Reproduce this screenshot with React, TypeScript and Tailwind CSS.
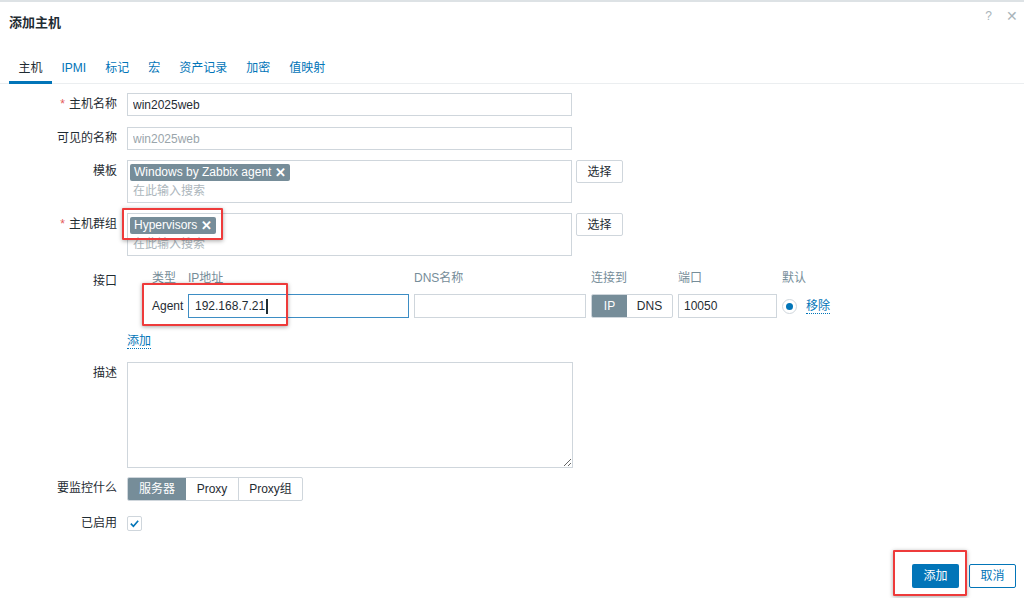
import React from "react";

const font = { fontFamily: '"Liberation Sans", Arial, "Noto Sans CJK SC", sans-serif' };

function Label({ text, required, className = "" }: { text: string; required?: boolean; className?: string }) {
  return (
    <div className={`w-[117px] shrink-0 text-right leading-[23px] text-[#1f2c33] ${className}`}>
      {required ? <span className="mr-[4px] text-[#e45959]">*</span> : null}
      {text}
    </div>
  );
}

function Highlight({ className }: { className: string }) {
  return (
    <span
      className={`pointer-events-none absolute rounded-[1px] border-2 border-[#ee3b3b] shadow-[0_1px_4px_rgba(0,0,0,0.35)] ${className}`}
    />
  );
}

function Chip({ text, children }: { text: string; children?: React.ReactNode }) {
  return (
    <span className="relative inline-flex h-[17px] items-center gap-[4px] rounded-[2px] bg-[#768d99] px-[4px] text-[12px] leading-[17px] text-white">
      {text}
      <span className="text-[13px] font-bold leading-none">✕</span>
      {children}
    </span>
  );
}

function MultiSelect({ chip, highlight }: { chip: string; highlight?: boolean }) {
  return (
    <div className="flex items-start gap-[4px]">
      <div className="flex h-[43px] w-[445px] flex-col border border-[#cfd6dc] px-[2px] pt-[2px]">
        <div>
          <Chip text={chip}>{highlight ? <Highlight className="-left-[8px] -top-[9px] h-[32px] w-[101px]" /> : null}</Chip>
        </div>
        <div className="pl-[3px] pt-[2px] leading-[16px] text-[#acb6bc]">在此输入搜索</div>
      </div>
      <button className="h-[23px] w-[47px] rounded-[2px] border border-[#cfd6dc] bg-white text-[#1f2c33]">选择</button>
    </div>
  );
}

export default function App() {
  return (
    <div style={font} className="relative flex h-[598px] w-[1024px] flex-col overflow-hidden border-t-2 border-[#dde2e5] bg-white text-[12px] text-[#1f2c33]">
      <header className="flex h-[42px] items-center justify-between pl-[9px] pr-[6px]">
        <h1 className="text-[13px] font-bold text-[#1f2c33]">添加主机</h1>
        <div className="-mt-[14px] flex items-center gap-[14px] text-[#a9b4ba]">
          <span className="text-[12px]">?</span>
          <span className="text-[14px]">✕</span>
        </div>
      </header>

      <nav className="mt-[10px] flex border-b border-[#ebeef0] pl-[9px]">
        {["主机", "IPMI", "标记", "宏", "资产记录", "加密", "值映射"].map((tab, i) => (
          <div
            key={tab}
            className={`-mb-px px-[9.5px] pb-[6px] pt-[7px] leading-[14px] ${
              i === 0 ? "border-b-[3px] border-[#0275b8] text-[#1f2c33]" : "border-b-[3px] border-transparent text-[#0275b8]"
            }`}
          >
            {tab}
          </div>
        ))}
      </nav>

      <div className="mt-[9px] flex flex-col">
        <div className="flex gap-[10px]">
          <Label text="主机名称" required />
          <input
            readOnly
            value="win2025web"
            className="h-[23px] w-[445px] border border-[#cfd6dc] px-[5px] text-[12px] text-[#1f2c33] outline-none"
          />
        </div>

        <div className="mt-[11px] flex gap-[10px]">
          <Label text="可见的名称" />
          <input
            readOnly
            placeholder="win2025web"
            className="h-[23px] w-[445px] border border-[#cfd6dc] px-[5px] text-[12px] outline-none placeholder:text-[#9aa5ab]"
          />
        </div>

        <div className="mt-[10px] flex gap-[10px]">
          <Label text="模板" />
          <MultiSelect chip="Windows by Zabbix agent" />
        </div>

        <div className="mt-[10px] flex gap-[10px]">
          <Label text="主机群组" required />
          <MultiSelect chip="Hypervisors" highlight />
        </div>

        <div className="mt-[14px] flex gap-[10px]">
          <Label text="接口" className="leading-[16px]" />
          <div className="flex flex-col">
            <div className="grid grid-cols-[31px_221px_172px_82px_99px_60px] gap-x-[5px] pl-[25px] leading-[16px] text-[#768d99]">
              <span>类型</span>
              <span>IP地址</span>
              <span>DNS名称</span>
              <span>连接到</span>
              <span>端口</span>
              <span>默认</span>
            </div>
            <div className="mt-[8px] grid grid-cols-[31px_221px_172px_82px_99px_60px] items-center gap-x-[5px] pl-[25px]">
              <span className="relative leading-[24px]">
                Agent
                <Highlight className="-left-[10px] -top-[11px] h-[43px] w-[146px]" />
              </span>
              <div className="flex h-[24px] items-center border border-[#3d8dc4] px-[6px]">
                192.168.7.21<span className="ml-px inline-block h-[15px] w-[2px] bg-[#1f2c33]" />
              </div>
              <div className="h-[24px] border border-[#cfd6dc]" />
              <div className="flex h-[24px] overflow-hidden rounded-[2px] border border-[#cfd6dc]">
                <span className="flex w-[35px] items-center justify-center bg-[#768d99] text-white">IP</span>
                <span className="flex flex-1 items-center justify-center">DNS</span>
              </div>
              <div className="flex h-[24px] items-center border border-[#cfd6dc] px-[5px]">10050</div>
              <div className="flex items-center gap-[9px]">
                <span className="flex h-[15px] w-[15px] items-center justify-center rounded-full border border-[#cfd6dc]">
                  <span className="h-[7px] w-[7px] rounded-full bg-[#0275b8]" />
                </span>
                <span className="border-b border-dotted border-[#0275b8] leading-[14px] text-[#0275b8]">移除</span>
              </div>
            </div>
            <div className="mt-[14px]">
              <span className="border-b border-dotted border-[#0275b8] leading-[14px] text-[#0275b8]">添加</span>
            </div>
          </div>
        </div>

        <div className="mt-[12px] flex gap-[10px]">
          <Label text="描述" />
          <textarea readOnly className="h-[106px] w-[446px] resize border border-[#cfd6dc] outline-none" />
        </div>

        <div className="mt-[9px] flex gap-[10px]">
          <Label text="要监控什么" />
          <div className="flex h-[24px] overflow-hidden rounded-[2px] border border-[#cfd6dc]">
            <span className="flex w-[58px] items-center justify-center bg-[#768d99] text-white">服务器</span>
            <span className="flex w-[53px] items-center justify-center border-r border-[#cfd6dc]">Proxy</span>
            <span className="flex w-[63px] items-center justify-center">Proxy组</span>
          </div>
        </div>

        <div className="mt-[11px] flex items-center gap-[10px]">
          <Label text="已启用" className="leading-[16px]" />
          <span className="flex h-[15px] w-[15px] items-center justify-center rounded-[2px] border border-[#cfd6dc]">
            <svg viewBox="0 0 12 12" className="h-[11px] w-[11px]">
              <path d="M2 6.2 4.8 9 10 3" fill="none" stroke="#0275b8" strokeWidth="1.8" />
            </svg>
          </span>
        </div>
      </div>

      <footer className="mt-auto flex justify-end gap-[10px] pb-[10px] pr-[8px]">
        <button className="relative h-[24px] w-[47px] rounded-[2px] bg-[#0275b8] text-white">
          添加
          <Highlight className="-left-[19px] -top-[14px] h-[46px] w-[74px]" />
        </button>
        <button className="h-[24px] w-[47px] rounded-[2px] border border-[#0275b8] bg-white text-[#0275b8]">取消</button>
      </footer>
    </div>
  );
}
